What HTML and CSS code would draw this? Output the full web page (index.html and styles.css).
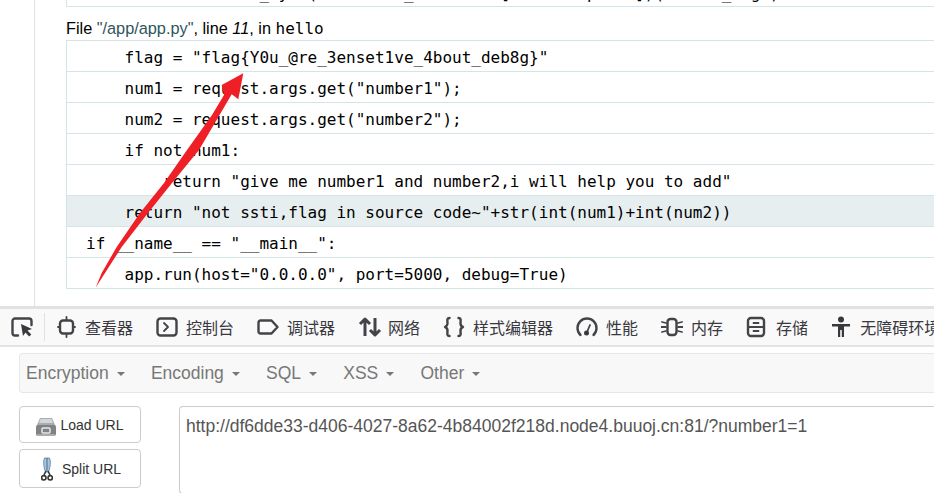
FILE: index.html
```html
<!DOCTYPE html>
<html lang="zh-CN">
<head>
<meta charset="utf-8">
<title>Debugger</title>
<link rel="stylesheet" href="styles.css">
</head>
<body>
<main class="page">
  <div class="trace">
    <div class="code">
      <div class="row"><pre>return self.ensure_sync(self.view_functions[rule.endpoint])(**view_args)</pre></div>
    </div>
    <p class="file">File <span class="path">"/app/app.py"</span>, line <em>11</em>, in <code>hello</code></p>
    <div class="code code-open">
      <div class="row"><pre>    flag = "flag{Y0u_@re_3enset1ve_4bout_deb8g}"</pre></div>
      <div class="row"><pre>    num1 = request.args.get("number1");</pre></div>
      <div class="row"><pre>    num2 = request.args.get("number2");</pre></div>
      <div class="row"><pre>    if not num1:</pre></div>
      <div class="row"><pre>        return "give me number1 and number2,i will help you to add"</pre></div>
      <div class="row current"><pre>    return "not ssti,flag in source code~"+str(int(num1)+int(num2))</pre></div>
      <div class="row"><pre>if __name__ == "__main__":</pre></div>
      <div class="row"><pre>    app.run(host="0.0.0.0", port=5000, debug=True)</pre></div>
    </div>
  </div>
  <svg class="arrow" viewBox="0 0 300 307" aria-hidden="true"><polygon points="243.300,73.300 238.300,99.300 231.700,94.300 199,150 172,183 148,213 121.700,247 105,273 95.700,287.500 101.700,273 116.700,247 140,213 164,183 187,150 212,115 224,95 221.700,85"/></svg>
</main>

<section class="devtools">
  <nav class="toolbar">
    <span class="pick">
      <svg width="22" height="22" viewBox="0 0 22 22"><path class="ic" d="M7 19.500H4a2.500 2.500 0 0 1-2.500-2.500V5A2.500 2.500 0 0 1 4 2.500h14A2.500 2.500 0 0 1 20.500 5v4"/><path class="fill" d="M10 8l11 5-4.500 1.600 3.800 4-2.200 2-3.600-4L12 20z"/></svg>
    </span>
    <div class="tab"><svg width="22" height="22" viewBox="0 0 22 22"><rect class="ic" x="5" y="4.500" width="13" height="13" rx="3"/><path class="ic thin" d="M11.500 1v3M11.500 18v3M3 11h2M18 11h2"/></svg><span>查看器</span></div>
    <div class="tab"><svg width="22" height="22" viewBox="0 0 22 22"><rect class="ic" x="1.500" y="2.500" width="19" height="17" rx="3"/><path class="ic thin" d="M8 7l4 4-4 4"/></svg><span>控制台</span></div>
    <div class="tab"><svg width="22" height="22" viewBox="0 0 22 22"><path class="ic" d="M3.500 4.500h11l6 6.500-6 6.500h-11a2 2 0 0 1-2-2v-9a2 2 0 0 1 2-2z"/></svg><span>调试器</span></div>
    <div class="tab"><svg width="24" height="22" viewBox="0 0 24 22" class="wide"><path class="ic heavy" d="M7 20V3M2 8l5-5 5 5M17 2v17M12 14l5 5 5-5"/></svg><span>网络</span></div>
    <div class="tab"><svg width="22" height="22" viewBox="0 0 22 22"><path class="ic" d="M6.500 2C3.500 2 4.500 5 4.500 7.500S3 10.500 2 11c1 .5 2.500 1 2.500 3.500S3.500 20 6.500 20M15.500 2c3 0 2 3 2 5.500S19 10.500 20 11c-1 .5-2.500 1-2.500 3.500S18.500 20 15.500 20"/></svg><span>样式编辑器</span></div>
    <div class="tab"><svg width="22" height="22" viewBox="0 0 22 22"><path class="ic" d="M4.500 19A9.500 9.500 0 1 1 17.500 19"/><path class="ic thin" d="M11 16l3-7"/><circle class="fill" cx="10.500" cy="17" r="2.500"/></svg><span>性能</span></div>
    <div class="tab"><svg width="22" height="22" viewBox="0 0 22 22"><rect class="ic" x="6.500" y="3" width="9" height="16" rx="3"/><path class="ic thin" d="M1 6l4 1M0 11h5M1 16l4-1M17 7l4-1M17 11h5M17 15l4 1"/></svg><span>内存</span></div>
    <div class="tab"><svg width="22" height="22" viewBox="0 0 22 22"><rect class="ic" x="2" y="2" width="16" height="18" rx="3"/><path class="ic thin" d="M2 11h16M7.500 7h5M7.500 15h5"/></svg><span>存储</span></div>
    <div class="tab"><svg width="22" height="22" viewBox="0 0 22 22"><circle class="fill" cx="10" cy="3.500" r="3"/><path class="fill" d="M1 8h18v2.500h-6V21h-2.200v-7H9.200v7H7V10.500H1z"/></svg><span>无障碍环境</span></div>
  </nav>

  <div class="hackbar">
    <div class="menu">
      <span class="item">Encryption<i class="caret"></i></span>
      <span class="item">Encoding<i class="caret"></i></span>
      <span class="item">SQL<i class="caret"></i></span>
      <span class="item">XSS<i class="caret"></i></span>
      <span class="item">Other<i class="caret"></i></span>
    </div>
    <div class="url-row">
      <div class="actions">
        <button class="btn load" type="button">
          <svg class="load-ic" width="20" height="18" viewBox="0 0 20 18"><path d="M4 0h12l3.500 8H.5z" fill="#a9adb0"/><path d="M4.500 1h11l1.500 4H3z" fill="#d4d6d8"/><rect y="7" width="20" height="11" rx="2" fill="#7f8386"/><rect x="6" y="10" width="8" height="5" rx="1" fill="none" stroke="#e8e8e8" stroke-width="1.500"/><rect x="1" y="16" width="18" height="2" fill="#a9acae"/></svg>
          <span>Load URL</span>
        </button>
        <button class="btn split" type="button">
          <svg width="12" height="24" viewBox="0 0 12 24"><path d="M3.500 1c-1.500 3-1 9 1 14h3c2-5 2.500-11 1-14z" fill="#a4c6e0" stroke="#5f7f99" stroke-width=".8"/><path d="M6 1v13" stroke="#4f6b82"/><path d="M5 14l-2 4M7 14l2 4" stroke="#333" stroke-width="1.600"/><circle cx="2.800" cy="20.800" r="2.200" fill="none" stroke="#333" stroke-width="1.600"/><circle cx="9.200" cy="20.800" r="2.200" fill="none" stroke="#333" stroke-width="1.600"/></svg>
          <span>Split URL</span>
        </button>
      </div>
      <div class="url">http://df6dde33-d406-4027-8a62-4b84002f218d.node4.buuoj.cn:81/?number1=1</div>
    </div>
  </div>
</section>
</body>
</html>
```
FILE: styles.css
```css
* { box-sizing: border-box; }
html, body { margin: 0; padding: 0; width: 934px; height: 493px; overflow: hidden; background: #fff; }
body { display: flex; flex-direction: column; font-family: "Liberation Sans", Arial, sans-serif; }

.page { position: relative; height: 306px; overflow: hidden; flex: none; }
.trace {
  height: 306px; margin-left: 34px; padding: 0 0 17px 31px;
  border-left: 1px solid #dfe3e3;
  display: flex; flex-direction: column; justify-content: flex-end;
}
.code { border: 1px solid #d5e5e7; border-right: 0; border-top: 0; flex: none; }
.code-open { border-top: 1px solid #d5e5e7; }
.row { height: 31px; border-top: 1px solid #d5e5e7; padding: 3px 0 0 19px; display: flex; align-items: center; }
.row:first-child { border-top: 0; height: 30px; }
.code:first-child .row { padding: 6px 0 0 19px; }
.row pre { margin: 0; font: 16px/20px "DejaVu Sans Mono", monospace; color: #000; white-space: pre; }
.current { background: #e6eeef; }
.file { flex: none; margin: 0; height: 33px; font-size: 16.3px; line-height: 20px; padding-top: 11px; color: #000; white-space: nowrap; }
.path { color: #2f5560; }
.file em { font-style: italic; }
.file code { font: 16px "DejaVu Sans Mono", monospace; }
.arrow { position: absolute; left: 0; top: 0; width: 300px; height: 307px; }
.arrow polygon { fill: #ee1f27; }

.devtools { flex: 1; display: flex; flex-direction: column; min-height: 0; }
.toolbar {
  height: 41px; flex: none; display: flex; align-items: center;
  background: #f9f9fa; border-top: 3px solid #e1e1e2; border-bottom: 2px solid #e4e4e5;
  padding-left: 11px; overflow: hidden; color: #38383d; font-family: "Noto Sans CJK SC", sans-serif; font-size: 16px;
}
.pick { display: flex; padding-right: 11px; height: 28px; align-items: center; border-right: 1px solid #e1e1e2; margin-right: 10px; flex: none; }
.tab { display: flex; align-items: center; gap: 8px; margin-right: 23px; flex: none; white-space: nowrap; }
.tab:last-child { gap: 7px; }
.wide { margin-right: -2px; }
.ic { fill: none; stroke: #444448; stroke-width: 2.4; stroke-linecap: round; stroke-linejoin: round; }
.heavy { stroke-width: 3; stroke-linecap: butt; }
.thin { stroke-width: 1.8; }
.fill { fill: #38383d; }

.hackbar { padding: 6px 0 0 19px; flex: 1; min-height: 0; }
.menu {
  height: 40px; background: #f8f8f8; border: 1px solid #e7e7e7; border-right: 0; border-radius: 4px 0 0 4px;
  display: flex; align-items: center; padding-left: 6px; gap: 26.2px; color: #777; font-size: 17.5px;
}
.item { display: flex; align-items: center; }
.caret { width: 0; height: 0; margin-left: 8px; margin-top: 2px; border-top: 4.500px solid #777; border-left: 4.500px solid transparent; border-right: 4.500px solid transparent; }
.url-row { display: flex; margin-top: 13px; gap: 38px; }
.actions { width: 122px; display: flex; flex-direction: column; gap: 6px; flex: none; }
.btn {
  width: 122px; display: flex; align-items: center; justify-content: center; background: #fff;
  border: 1px solid #ccc; border-radius: 4px; color: #333; font: 14px "Liberation Sans", Arial, sans-serif; padding: 0;
}
.load { height: 37px; gap: 4px; }
.load-ic { margin-top: 4px; }
.split { height: 39px; gap: 9px; padding-left: 2px; }
.url {
  flex: 1; height: 88px; border: 1px solid #ccc; border-right: 0; border-radius: 4px 0 0 4px;
  padding: 7px 6px; font-size: 17.5px; line-height: 24px; color: #555; white-space: nowrap;
}
```
